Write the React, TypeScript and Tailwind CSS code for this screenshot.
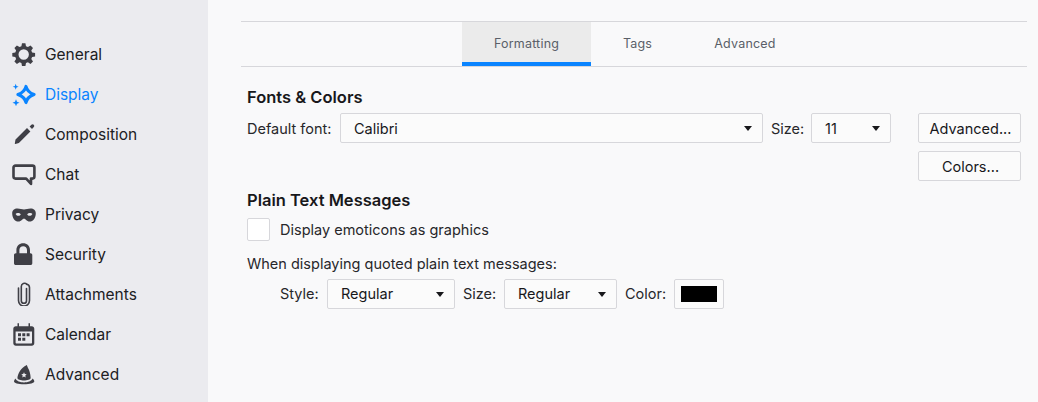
import React from "react";

const dark = "#3f3f46";

const Gear = () => (
  <svg width="24" height="24" viewBox="0 0 24 24" fill={dark}>
    <path fillRule="evenodd" d="M10 1.300h3.400l.6 3 1.900.8 2.600-1.700 2.500 2.500-1.700 2.600.8 1.900 3 .6v3.400l-3 .6-.8 1.900 1.700 2.600-2.500 2.500-2.600-1.700-1.900.8-.6 3H10l-.6-3-1.900-.8-2.600 1.700-2.500-2.500 1.700-2.600-.8-1.900-3-.6V11l3-.6.8-1.900-1.700-2.600 2.500-2.500 2.600 1.700 1.900-.8zM11.700 7.300a5.200 5.200 0 1 0 0 10.400 5.200 5.200 0 0 0 0-10.400z" />
  </svg>
);
const Sparkle = () => (
  <svg width="24" height="24" viewBox="0 0 24 24" fill="#0a84ff">
    <path fill="none" stroke="#0a84ff" strokeWidth="3.200" strokeLinejoin="round" d="M14 4.500C15 8.700 17 10.700 22 12.500C17 14.300 15 16.300 14 20.500C13 16.300 11 14.300 6 12.500C11 10.700 13 8.700 14 4.500Z" />
    <path d="M3.700 1.700l.8 2.200 2.200.8-2.200.8-.8 2.200-.8-2.200-2.200-.8 2.200-.8zM4 17.200l1 2.500 2.500 1-2.500 1-1 2.500-1-2.500-2.500-1 2.500-1z" />
  </svg>
);
const Pencil = () => (
  <svg width="24" height="24" viewBox="0 0 24 24" fill={dark}>
    <path d="M3.500 17.500L15 6l3.400 3.400L6.900 20.900l-3.600 1a.4.4 0 0 1-.5-.5z" />
    <path d="M19.400 2.700a1.700 1.700 0 0 1 2.300 0l.1.100a1.700 1.700 0 0 1 0 2.300l-1.800 1.800-2.400-2.400z" />
  </svg>
);
const Chat = () => (
  <svg width="24" height="24" viewBox="0 0 24 24" fill="none" stroke={dark} strokeWidth="2.600" strokeLinejoin="round">
    <path d="M3.500 3.600h16.900a2 2 0 0 1 2 2v9a2 2 0 0 1-2 2h-1.400v5.400l-4.800-5.400H3.500a2 2 0 0 1-2-2v-9a2 2 0 0 1 2-2z" />
  </svg>
);
const Mask = () => (
  <svg width="24" height="24" viewBox="0 0 24 24" fill={dark}>
    <path fillRule="evenodd" d="M5.500 6.400c2.500 0 4.500 1 6.500 1s4-1 6.500-1c3.200 0 5.300 1.600 5.300 5 0 4.300-2.600 8.200-6.300 8.200-2.800 0-3.500-2.800-5.500-2.800s-2.700 2.800-5.500 2.800C2.800 19.600.2 15.700.2 11.400c0-3.400 2.100-5 5.300-5zm.3 4.700c-1 0-1.700.3-2.200.8.700 1.300 1.700 1.900 2.900 1.900 1 0 1.800-.4 2.300-1.300-.6-.9-1.700-1.400-3-1.400zm12.400 0c-1.300 0-2.400.5-3 1.400.5.900 1.300 1.300 2.300 1.300 1.200 0 2.200-.6 2.900-1.900-.5-.5-1.200-.8-2.200-.8z" />
  </svg>
);
const Lock = () => (
  <svg width="24" height="24" viewBox="0 0 24 24" fill={dark}>
    <path fillRule="evenodd" d="M11.200 1.300c3.700 0 6.800 2.700 6.800 6.700v3.300h.5c1 0 1.800.8 1.800 1.800v8.100c0 1-.8 1.800-1.800 1.800H3.800c-1 0-1.800-.8-1.800-1.800v-8.100c0-1 .8-1.800 1.800-1.800h.6V8c0-4 3.100-6.700 6.800-6.700zm0 2.900c-2.200 0-3.800 1.600-3.800 3.900v3.200h7.600V8.100c0-2.300-1.600-3.900-3.800-3.900z" />
  </svg>
);
const Clip = () => (
  <svg width="24" height="24" viewBox="0 0 24 24" fill="none" stroke={dark} strokeWidth="1.600" strokeLinecap="round">
    <path d="M14.500 6.500v12.200a2.600 2.600 0 0 1-5.200 0V4.500a3.200 3.200 0 0 1 5.500-2.200" />
    <path d="M6.500 6v12.600a5.500 5.500 0 0 0 11 0V5.500a3.500 3.500 0 0 0-2.700-3.200" />
  </svg>
);
const Calendar = () => (
  <svg width="24" height="24" viewBox="0 0 24 24" fill={dark}>
    <path fillRule="evenodd" d="M5.500 1.300h1.500v3h9.500v-3H18v3h1.800c1.400 0 2.500 1.100 2.500 2.500v14.400c0 1.400-1.100 2.500-2.500 2.500H3.800c-1.400 0-2.500-1.100-2.500-2.500V6.800c0-1.400 1.100-2.500 2.500-2.500h1.700zM3.600 9.500v11.300c0 .4.300.7.700.7h15c.4 0 .7-.3.700-.7V9.500z" />
    <path d="M6 11.200h3v3H6zM10.300 11.200h3v3h-3zM14.600 11.200h3v3h-3zM6 15.800h3v3H6zM10.300 15.800h3v3h-3z" />
  </svg>
);
const Hat = () => (
  <svg width="24" height="24" viewBox="0 0 24 24" fill={dark}>
    <path fillRule="evenodd" d="M14.800 3L16 6C17.600 8.500 18.400 12 18.700 16c0 1.500-3.500 2.500-6.700 2.500S5.400 17.500 5.400 16C6 11.500 8.500 6 14.800 3zM12 10.300l-.8 1.800-1.900.2 1.400 1.300-.4 1.900 1.700-1 1.700 1-.4-1.900 1.400-1.300-1.900-.2z" />
    <path d="M3.500 16.500C4.500 19 8 20.400 12 20.400s7.500-1.400 8.500-3.900c1.300 1 1.800 2 1.800 3 0 1.500-4.300 2.800-10.300 2.800S2 21 2 19.500c0-1 .5-2 1.500-3z" />
  </svg>
);

const items: [string, React.ReactNode, boolean?][] = [
  ["General", <Gear />],
  ["Display", <Sparkle />, true],
  ["Composition", <Pencil />],
  ["Chat", <Chat />],
  ["Privacy", <Mask />],
  ["Security", <Lock />],
  ["Attachments", <Clip />],
  ["Calendar", <Calendar />],
  ["Advanced", <Hat />],
];

const Caret = () => <span className="w-0 h-0 border-x-[4px] border-x-transparent border-t-[5px] border-t-[#18181b]" />;

const Select = ({ value, cls, textCls = "" }: { value: string; cls: string; textCls?: string }) => (
  <div className={`h-[30px] flex items-center justify-between pl-[13px] pr-[10px] bg-[#fbfbfb] border border-[#d7d7db] rounded-[2px] text-[#18181b] ${cls}`}>
    <span className={textCls}>{value}</span>
    <Caret />
  </div>
);

const Button = ({ children }: { children: React.ReactNode }) => (
  <div className="w-[103px] h-[30px] flex items-center justify-center pt-[2px] pl-[2px] bg-[#fbfbfb] border border-[#d7d7db] rounded-[2px] text-[#18181b]">
    {children}
  </div>
);

export default function App() {
  return (
    <div className="w-[1038px] h-[402px] overflow-hidden flex bg-[#f9f9fa] text-[14.5px] text-[#27272a] font-['Inter',sans-serif]">
      <aside className="w-[208px] shrink-0 bg-[#ebebef] pt-[34px] pl-[12px] flex flex-col">
        {items.map(([label, icon, active]) => (
          <div key={label} className={`h-[40px] flex items-center gap-[9px] text-[15.5px] ${active ? "text-[#0a84ff]" : "text-[#202023]"}`}>
            <span className="w-[24px] h-[24px] flex">{icon}</span>
            <span className="pt-[2px]">{label}</span>
          </div>
        ))}
      </aside>
      <main className="flex-1 min-w-0 pt-[21px] pl-[33px] pr-[11px]">
        <div className="h-[46px] border-y border-[#d7d7db] flex justify-center text-[12.5px] text-[#5a5f68] tracking-[0.2px]">
          <div className="w-[129px] h-[44px] bg-[#ebebeb] border-b-[4px] border-[#0a84ff] flex items-center justify-center pt-[4px]">Formatting</div>
          <div className="w-[93px] h-[44px] flex items-center justify-center">Tags</div>
          <div className="w-[122px] h-[44px] flex items-center justify-center">Advanced</div>
        </div>
        <div className="px-[6px]">
          <h2 className="mt-[20px] h-[20px] leading-[20px] text-[16.5px] font-semibold text-[#18181b]">Fonts &amp; Colors</h2>
          <div className="mt-[6px] flex items-start">
            <div className="flex items-center">
              <span className="w-[93px] pt-[2px]">Default font:</span>
              <Select value="Calibri" cls="w-[423px]" textCls="pt-[2px]" />
              <span className="w-[40px] ml-[8px] pt-[2px]">Size:</span>
              <Select value="11" cls="w-[80px]" textCls="pt-[2px]" />
            </div>
            <div className="ml-[27px] flex flex-col gap-[8px]">
              <Button>Advanced...</Button>
              <Button>Colors...</Button>
            </div>
          </div>
          <h2 className="mt-[9px] h-[20px] leading-[20px] text-[16.5px] font-semibold text-[#18181b]">Plain Text Messages</h2>
          <div className="mt-[8px] flex items-center gap-[10px]">
            <span className="w-[23px] h-[23px] bg-white border border-[#d7d7db] rounded-[2px]" />
            <span>Display emoticons as graphics</span>
          </div>
          <div className="mt-[13px] h-[20px] leading-[20px]">When displaying quoted plain text messages:</div>
          <div className="mt-[5px] pl-[33px] flex items-center">
            <span className="w-[47px]">Style:</span>
            <Select value="Regular" cls="w-[128px]" />
            <span className="w-[41px] ml-[8px]">Size:</span>
            <Select value="Regular" cls="w-[113px]" />
            <span className="w-[49px] ml-[8px]">Color:</span>
            <div className="w-[50px] h-[30px] flex items-center justify-center bg-[#fbfbfb] border border-[#d7d7db] rounded-[2px]">
              <span className="w-[36px] h-[16px] bg-black" />
            </div>
          </div>
        </div>
      </main>
    </div>
  );
}
